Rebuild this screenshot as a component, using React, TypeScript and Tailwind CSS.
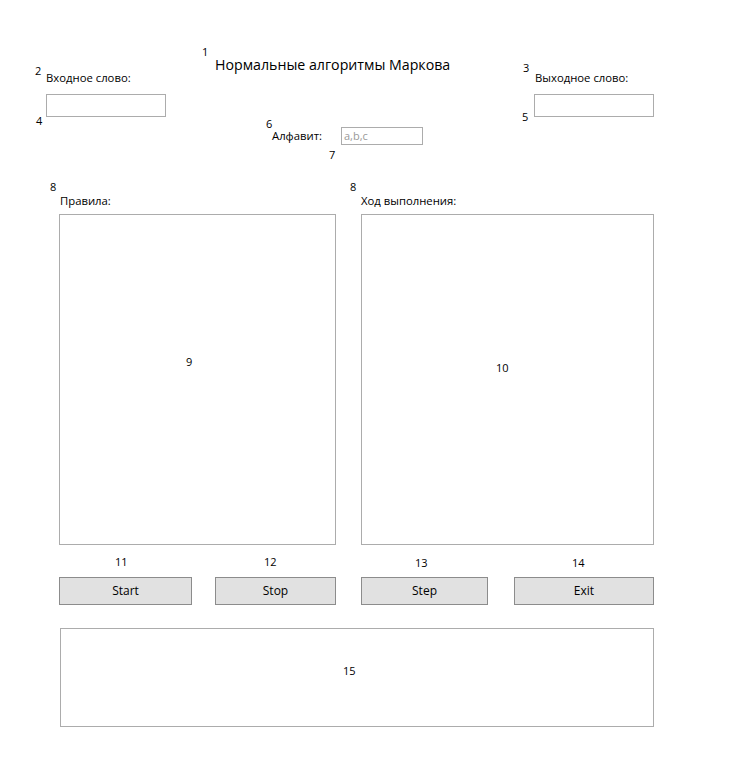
import React from 'react';

const Num: React.FC<{ n: string; x: number; y: number }> = ({ n, x, y }) => (
  <span
    className="absolute text-[11px] leading-none text-black"
    style={{ left: x, top: y }}
  >
    {n}
  </span>
);

const Field: React.FC<{ className?: string; placeholder?: string }> = ({ className = '', placeholder }) => (
  <div className={`border border-[#acacac] bg-white text-[11px] text-[#9a9a9a] pl-[2px] flex items-center ${className}`}>
    {placeholder}
  </div>
);

const Btn: React.FC<{ label: string; className?: string }> = ({ label, className = '' }) => (
  <button className={`h-[28px] bg-[#e1e1e1] border border-[#8c8c8c] text-[12px] text-black ${className}`}>
    {label}
  </button>
);

export default function App() {
  return (
    <div className="relative w-[732px] h-[769px] bg-white text-black font-['Open_Sans','Noto_Sans',sans-serif]">
      {/* header */}
      <div className="flex pt-[55px]">
        <div className="ml-[46px] mt-[15px] w-[120px]">
          <div className="text-[11.3px] leading-[16px]">Входное слово:</div>
          <Field className="mt-[8px] h-[23px]" />
        </div>
        <div className="ml-[49px] text-[14.2px] leading-[20px]">Нормальные алгоритмы Маркова</div>
        <div className="ml-auto mr-[78px] mt-[15px] w-[120px]">
          <div className="text-[11.3px] leading-[16px] ml-[1px]">Выходное слово:</div>
          <Field className="mt-[8px] h-[23px]" />
        </div>
      </div>

      <div className="flex items-center ml-[272px] mt-[10px]">
        <span className="w-[69px] text-[11.3px] leading-[16px]">Алфавит:</span>
        <Field className="w-[82px] h-[18px]" placeholder="a,b,c" />
      </div>

      {/* panels */}
      <div className="flex mt-[48px]">
        <div className="ml-[59px] w-[277px]">
          <div className="text-[11.3px] leading-[16px] ml-[1px]">Правила:</div>
          <div className="mt-[5px] h-[331px] border border-[#acacac]" />
        </div>
        <div className="ml-[25px] w-[293px]">
          <div className="text-[11.3px] leading-[16px]">Ход выполнения:</div>
          <div className="mt-[5px] h-[331px] border border-[#acacac]" />
        </div>
      </div>

      {/* buttons */}
      <div className="flex mt-[32px] ml-[59px]">
        <Btn label="Start" className="w-[133px]" />
        <Btn label="Stop" className="ml-[23px] w-[121px]" />
        <Btn label="Step" className="ml-[25px] w-[127px]" />
        <Btn label="Exit" className="ml-[26px] w-[140px]" />
      </div>

      {/* log */}
      <div className="ml-[60px] mt-[23px] w-[594px] h-[99px] border border-[#acacac]" />

      {/* annotations */}
      <Num n="1" x={202} y={46} />
      <Num n="2" x={35} y={65} />
      <Num n="3" x={523} y={62} />
      <Num n="4" x={36} y={115} />
      <Num n="5" x={522} y={111} />
      <Num n="6" x={266} y={118} />
      <Num n="7" x={329} y={149} />
      <Num n="8" x={50} y={181} />
      <Num n="8" x={350} y={181} />
      <Num n="9" x={186} y={356} />
      <Num n="10" x={496} y={362} />
      <Num n="11" x={115} y={556} />
      <Num n="12" x={264} y={556} />
      <Num n="13" x={415} y={557} />
      <Num n="14" x={572} y={557} />
      <Num n="15" x={343} y={665} />
    </div>
  );
}
